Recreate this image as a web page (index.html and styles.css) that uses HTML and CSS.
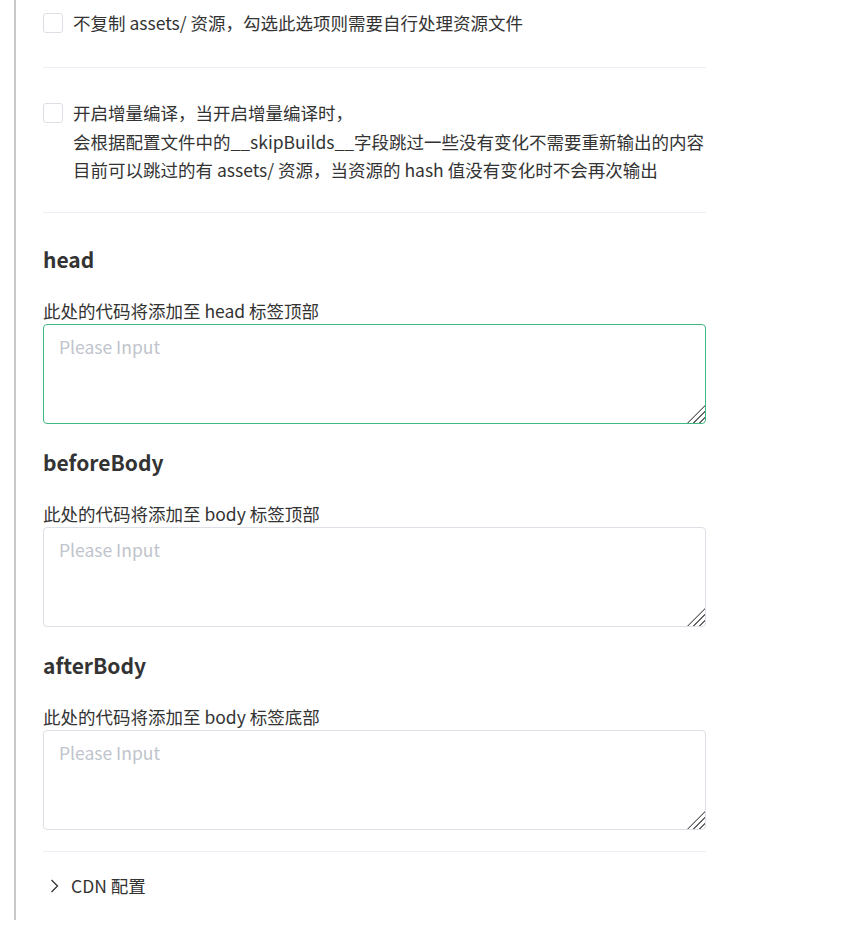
FILE: index.html
```html
<!DOCTYPE html>
<html lang="zh-CN">
<head>
    <meta charset="UTF-8">
    <meta name="viewport" content="width=device-width, initial-scale=1.0">
    <title>构建配置</title>
    <link rel="stylesheet" href="styles.css">
</head>
<body>
    <div class="page">
        <label class="check-row first">
            <span class="checkbox"></span>
            <span class="check-text">不复制 assets/ 资源，勾选此选项则需要自行处理资源文件</span>
        </label>
        <div class="divider"></div>

        <label class="check-row second">
            <span class="checkbox"></span>
            <span class="check-text">开启增量编译，当开启增量编译时，<br>会根据配置文件中的__skipBuilds__字段跳过一些没有变化不需要重新输出的内容<br>目前可以跳过的有 assets/ 资源，当资源的 hash 值没有变化时不会再次输出</span>
        </label>
        <div class="divider"></div>

        <div class="code-field first-field">
            <h3 class="field-title">head</h3>
            <div class="field-label">此处的代码将添加至 head 标签顶部</div>
            <div class="textarea-wrap">
                <textarea class="code-input focused" placeholder="Please Input"></textarea>
            </div>
        </div>

        <div class="code-field">
            <h3 class="field-title">beforeBody</h3>
            <div class="field-label">此处的代码将添加至 body 标签顶部</div>
            <div class="textarea-wrap">
                <textarea class="code-input" placeholder="Please Input"></textarea>
            </div>
        </div>

        <div class="code-field">
            <h3 class="field-title">afterBody</h3>
            <div class="field-label">此处的代码将添加至 body 标签底部</div>
            <div class="textarea-wrap">
                <textarea class="code-input" placeholder="Please Input"></textarea>
            </div>
        </div>

        <div class="divider last"></div>

        <div class="collapse-row">
            <svg class="chevron" width="10" height="14" viewBox="0 0 10 14">
                <path d="M2.5 1 L8.5 7 L2.5 13" fill="none" stroke="#333" stroke-width="1.3"/>
            </svg>
            <span>CDN 配置</span>
        </div>
    </div>
</body>
</html>
```

FILE: styles.css
```css
body {
    margin: 0;
    font-family: "Noto Sans CJK SC", "Noto Sans", sans-serif;
    font-size: 17.5px;
    color: #333;
    background: #fff;
}

.page {
    margin-left: 14px;
    width: 663px;
    border-left: 2px solid #c8c8c8;
    padding: 9px 0 20px 27px;
}

.check-row {
    display: flex;
    align-items: flex-start;
    gap: 10px;
    line-height: 28.5px;
    padding: 31px 0 27.5px;
}

.check-row.first {
    padding-top: 0;
    padding-bottom: 29.5px;
}

.checkbox {
    flex: none;
    width: 18px;
    height: 18px;
    margin-top: 4px;
    border: 1px solid #dcdfe6;
    border-radius: 3px;
    background: #fff;
}

.check-text {
    white-space: nowrap;
}

.divider {
    height: 1px;
    background: #ebeef5;
}

.divider.last {
    margin-top: 21px;
}

.code-field {
    margin-top: 24px;
}

.code-field.first-field {
    margin-top: 32px;
}

.field-title {
    margin: 0;
    font-size: 21px;
    line-height: 28px;
    font-weight: bold;
}

.field-label {
    margin-top: 25px;
    line-height: 26px;
}

.textarea-wrap {
    position: relative;
}

.textarea-wrap::after {
    content: '';
    position: absolute;
    right: 1px;
    bottom: 1px;
    width: 18px;
    height: 18px;
    background: repeating-linear-gradient(135deg, transparent 0 3px, #666 3px 4.5px);
    clip-path: polygon(100% 0, 100% 100%, 0 100%);
    pointer-events: none;
}

.code-input {
    display: block;
    box-sizing: border-box;
    width: 100%;
    height: 100px;
    margin: 0;
    padding: 8px 15px;
    font-family: inherit;
    font-size: 17.5px;
    line-height: 28px;
    color: #333;
    border: 1px solid #dcdfe6;
    border-radius: 4px;
    resize: none;
    outline: none;
}

.code-input.focused {
    border-color: #42b983;
}

.code-input::placeholder {
    color: #c0c4cc;
}

.collapse-row {
    display: flex;
    align-items: center;
    gap: 12px;
    margin-top: 20px;
    padding-left: 6px;
    line-height: 28px;
}

.chevron {
    flex: none;
}
```
